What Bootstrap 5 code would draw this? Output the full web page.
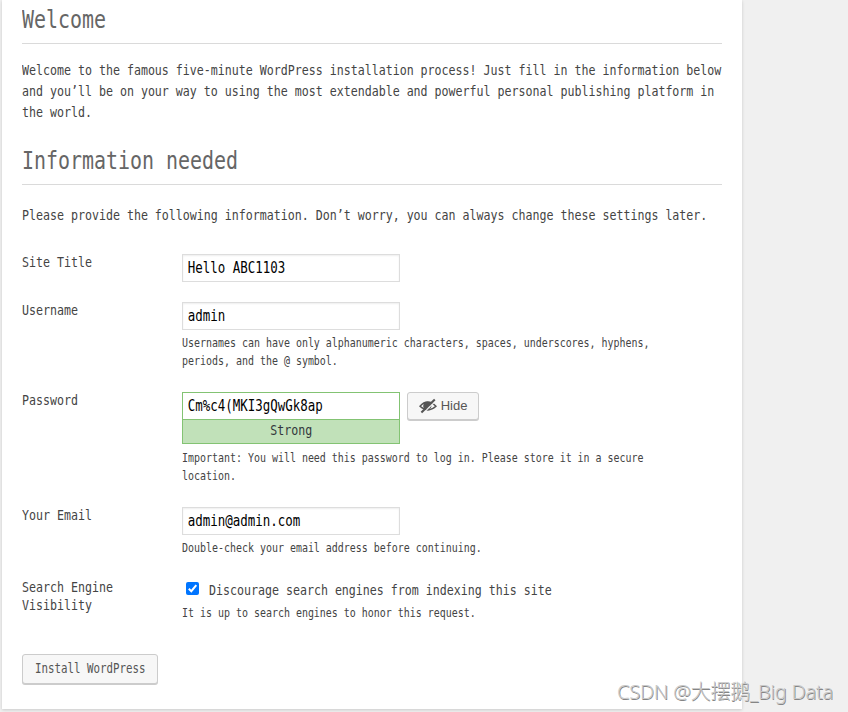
<!DOCTYPE html>
<html lang="en">
<head>
<meta charset="utf-8">
<title>WordPress Installation</title>
<link href="https://cdn.jsdelivr.net/npm/bootstrap@5.3.0/dist/css/bootstrap.min.css" rel="stylesheet">
<style>
:root{--squeeze:.7985}
html,body{height:712px;overflow:hidden}
body{background:#f0f0f0;color:#444;font-family:"DejaVu Sans Mono",monospace;font-size:14.56px;line-height:21px}
.panel{width:740px;height:709px;margin-left:2px;padding:0 20px;box-shadow:0 1px 3px rgba(0,0,0,.16)}
.cond{display:block;width:max-content;white-space:nowrap;transform:scaleX(var(--squeeze));transform-origin:0 50%}
.heading{font-size:24.96px;font-weight:400;line-height:30px;color:#666;border-bottom:1px solid #dadada;margin:0}
.first-heading{height:44px;padding-top:5px}
.second-heading{height:39px;margin-top:24px}
.intro{margin-top:15px}
.provide{margin:19px 0 29px}
.field-row{display:flex}
.field-label{width:160px;flex:none;line-height:18px;margin-top:-1px}
.hint{font-size:12.48px;line-height:18px;padding-top:4px}
.hint-wide{padding-top:5px}
.field-box{width:218px;height:28px;border:1px solid #ddd;background:#fff;box-shadow:inset 0 1px 2px rgba(0,0,0,.07);overflow:hidden}
.field-box input{width:265px;height:26px;border:0;background:none;outline:0;padding:0 6px;font-size:15.6px;color:#000;transform:scaleX(var(--squeeze));transform-origin:0 50%;display:block}
.field-box.good{border-color:#83c373;box-shadow:none}
.strength{width:218px;height:25px;margin-top:-1px;background:#c1e1b9;border:1px solid #83c373;color:#32373c;line-height:20px}
.strength .cond{transform-origin:50% 50%;margin:auto}
.r1{height:48px}.r2{height:90px}.r3{height:115px}.r4{height:72px}.r5{height:75px}
.wp-btn{border:1px solid #ccc;border-radius:3px;background:#f7f7f7;color:#555;box-shadow:0 1px 0 #ccc;padding:0}
.hide-btn{width:72px;height:28px;margin-left:7px;padding-bottom:1px;font:13px "Liberation Sans",Arial,sans-serif}
.install-btn{width:136px;height:30px;font-size:13.52px;line-height:26px;padding-bottom:2px}
.install-btn .cond{margin-left:12px}
.tick{width:13px;height:13px;margin:-2px 10px 0 4px;display:block}
.site-mark{position:absolute;left:617px;top:678px;font:20px/28px "Noto Sans","Noto Sans CJK SC",sans-serif;font-weight:300;color:#c9c9c9;white-space:nowrap;text-shadow:.7px .7px 0 #858585;letter-spacing:-.25px}
</style>
</head>
<body>
<main class="panel bg-white">
  <h1 class="heading first-heading"><span class="cond">Welcome</span></h1>
  <p class="intro mb-0"><span class="cond">Welcome to the famous five-minute WordPress installation process! Just fill in the information below</span><span class="cond">and you’ll be on your way to using the most extendable and powerful personal publishing platform in</span><span class="cond">the world.</span></p>
  <h2 class="heading second-heading"><span class="cond">Information needed</span></h2>
  <p class="provide"><span class="cond">Please provide the following information. Don’t worry, you can always change these settings later.</span></p>
  <form>
    <div class="field-row r1">
      <label class="field-label"><span class="cond">Site Title</span></label>
      <div><div class="field-box"><input value="Hello ABC1103" aria-label="Site Title"></div></div>
    </div>
    <div class="field-row r2">
      <label class="field-label"><span class="cond">Username</span></label>
      <div><div class="field-box"><input value="admin" aria-label="Username"></div>
        <div class="hint"><span class="cond">Usernames can have only alphanumeric characters, spaces, underscores, hyphens,</span><span class="cond">periods, and the @ symbol.</span></div></div>
    </div>
    <div class="field-row r3">
      <label class="field-label"><span class="cond">Password</span></label>
      <div>
        <div class="d-flex"><div class="field-box good"><input value="Cm%c4(MKI3gQwGk8ap" aria-label="Password"></div>
          <button type="button" class="wp-btn hide-btn d-flex align-items-center justify-content-center"><svg width="18" height="16" viewBox="0 0 18 16" class="me-1"><path d="M1 8.3Q8.5-.2 17 8.3Q9 15.5 1 8.3Z" fill="none" stroke="#555" stroke-width="1.4"/><path d="M5 4.7Q8 2.8 12 4.6L6 11.6Q3 9.5 5 4.7Z" fill="#555"/><path d="M11.7 6.6Q12.8 10 8.5 11" fill="none" stroke="#555" stroke-width="1.2"/><path d="M4 15.3 16.6 3" stroke="#f7f7f7" stroke-width="1.1"/><path d="M2.4 14.6 15.8 1.6" stroke="#555" stroke-width="2.1"/></svg>Hide</button></div>
        <div class="strength"><span class="cond">Strong</span></div>
        <div class="hint hint-wide"><span class="cond">Important: You will need this password to log in. Please store it in a secure</span><span class="cond">location.</span></div>
      </div>
    </div>
    <div class="field-row r4">
      <label class="field-label"><span class="cond">Your Email</span></label>
      <div><div class="field-box"><input value="admin@admin.com" aria-label="Your Email"></div>
        <div class="hint"><span class="cond">Double-check your email address before continuing.</span></div></div>
    </div>
    <div class="field-row r5">
      <label class="field-label"><span class="cond">Search Engine</span><span class="cond">Visibility</span></label>
      <div><label class="d-flex align-items-center"><svg class="tick" viewBox="0 0 13 13" role="img" aria-label="checked"><rect width="13" height="13" rx="2" fill="#0075ff"/><path d="M2.8 6.8 5.3 9.2 10.3 3.2" fill="none" stroke="#fff" stroke-width="2"/></svg><span class="cond">Discourage search engines from indexing this site</span></label>
        <div class="hint"><span class="cond">It is up to search engines to honor this request.</span></div></div>
    </div>
    <button type="button" class="wp-btn install-btn text-start"><span class="cond">Install WordPress</span></button>
  </form>
</main>
<div class="site-mark">CSDN @大摆鹅_Big Data</div>
<script src="https://cdn.jsdelivr.net/npm/bootstrap@5.3.0/dist/js/bootstrap.bundle.min.js"></script>
</body>
</html>
